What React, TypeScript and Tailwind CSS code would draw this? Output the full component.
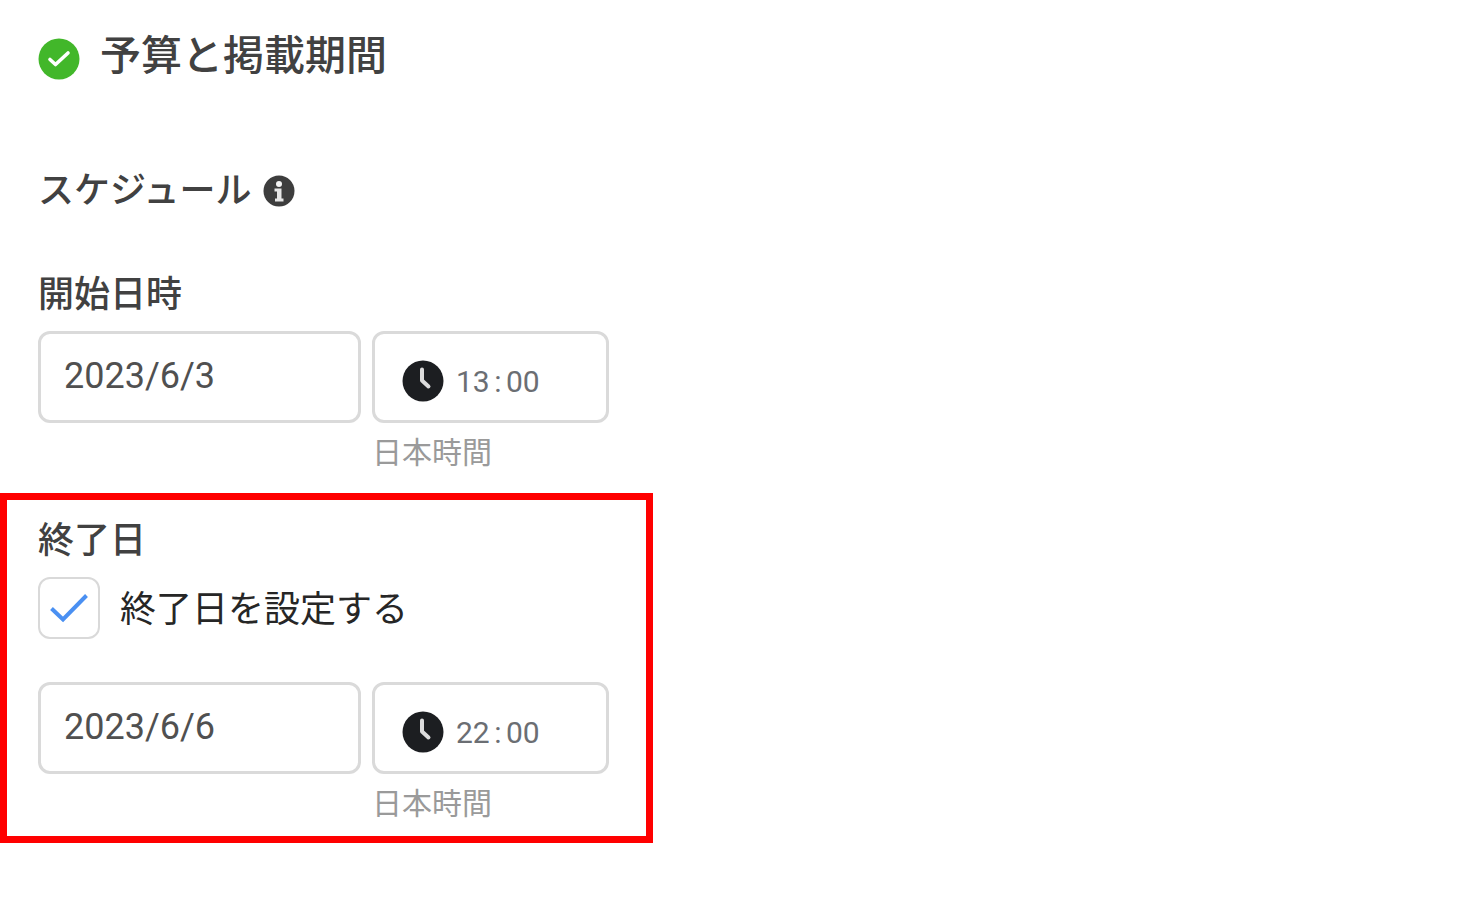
import { useState } from "react";

type DateTimeFieldsProps = {
  id: string;
  label: string;
  date: string;
  hour: string;
  minute: string;
};

function DateTimeFields({ id, label, date, hour, minute }: DateTimeFieldsProps) {
  const [day, setDay] = useState(date);
  const [hh, setHh] = useState(hour);
  const [mm, setMm] = useState(minute);

  return (
    <div className="flex items-start gap-[11px]">
      <input
        id={id}
        type="text"
        aria-label={label}
        value={day}
        onChange={(e) => setDay(e.target.value)}
        className="h-[92px] w-[323px] rounded-xl border-3 border-[#dadada] bg-white px-[23px] pb-0.5 text-4xl text-[#505050] outline-none"
      />

      <div>
        <div className="flex h-[92px] w-[237px] items-center rounded-xl border-3 border-[#dadada] bg-white pt-2 pl-[27px] text-[30px] text-[#6b6e73]">
          <ClockIcon />
          <input
            type="text"
            aria-label={`${label} 時`}
            value={hh}
            onChange={(e) => setHh(e.target.value)}
            className="ml-3 w-[34px] outline-none"
          />
          <span className="w-4 text-center">:</span>
          <input
            type="text"
            aria-label={`${label} 分`}
            value={mm}
            onChange={(e) => setMm(e.target.value)}
            className="w-[34px] outline-none"
          />
        </div>
        <p className="mt-[15px] text-[30px] leading-[30px] text-[#9a9a9a]">日本時間</p>
      </div>
    </div>
  );
}

function ClockIcon() {
  return (
    <svg viewBox="0 0 42 42" className="size-[42px] shrink-0" aria-hidden="true">
      <circle cx="21" cy="21" r="20.5" fill="#1c1e21" />
      <path d="M20 9.5V20.5L26.5 26.5" fill="none" stroke="#dcdcdc" strokeWidth="4" strokeLinecap="round" strokeLinejoin="round" />
    </svg>
  );
}

export default function App() {
  const [hasEndDate, setHasEndDate] = useState(true);

  return (
    <main className="min-h-screen bg-white pt-[34px] font-[Roboto,'Noto_Sans_CJK_JP',sans-serif] text-[#414141]">
      <section className="pl-[38px]">
        {/* Section title */}
        <div className="flex items-start gap-5">
          <svg viewBox="0 0 42 42" className="mt-1 size-[42px] shrink-0" aria-hidden="true">
            <circle cx="21" cy="21" r="20.5" fill="#42b72a" />
            <path d="M12 21.5L17.5 26.5L30 15" fill="none" stroke="#fff" strokeWidth="3.6" strokeLinecap="round" strokeLinejoin="round" />
          </svg>
          <h1 className="text-[41px] leading-11 font-medium">予算と掲載期間</h1>
        </div>

        <div className="mt-[91px] flex items-center gap-3">
          <h2 className="text-4xl leading-10 font-medium">スケジュール</h2>
          <button type="button" aria-label="スケジュールの詳細">
            <svg viewBox="0 0 32 32" className="size-8" aria-hidden="true">
              <circle cx="16" cy="16" r="15.5" fill="#3d3d3d" />
              <circle cx="16" cy="9" r="3" fill="#f4f4f4" />
              <path d="M11.5 13.5H18.5V23.5H20.5V26.5H12V23.5H14V16.5H11.5Z" fill="#e6e6e6" />
            </svg>
          </button>
        </div>

        {/* Start */}
        <label htmlFor="start-date" className="mt-16 mb-4 block w-fit text-4xl leading-10 font-medium">
          開始日時
        </label>
        <DateTimeFields id="start-date" label="開始日時" date="2023/6/3" hour="13" minute="00" />
      </section>

      {/* End */}
      <section className="mt-[25px] w-fit border-7 border-[#ff0000] pt-[21px] pr-[37px] pb-[17px] pl-[31px]">
        <h2 className="text-4xl leading-10 font-medium">終了日</h2>
        <label className="mt-4 mb-[43px] flex items-center gap-5 text-4xl leading-10 text-[#262626]">
          <span className="relative size-[62px]">
            <input
              type="checkbox"
              checked={hasEndDate}
              onChange={(e) => setHasEndDate(e.target.checked)}
              className="block size-[62px] appearance-none rounded-xl border-2 border-[#d9d9d9] bg-white"
            />
            {hasEndDate && (
              <svg viewBox="0 0 62 62" className="pointer-events-none absolute inset-0" aria-hidden="true">
                <path d="M13.5 31.5L25 42.5L48.5 18.5" fill="none" stroke="#4a90f2" strokeWidth="4" />
              </svg>
            )}
          </span>
          <span className="pt-1">終了日を設定する</span>
        </label>
        <DateTimeFields id="end-date" label="終了日" date="2023/6/6" hour="22" minute="00" />
      </section>
    </main>
  );
}
